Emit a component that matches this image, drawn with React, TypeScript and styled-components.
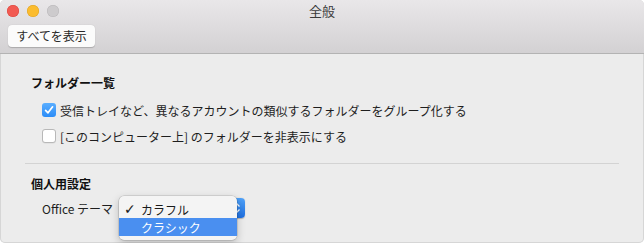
import React from "react";
import styled, { createGlobalStyle } from "styled-components";

const Global = createGlobalStyle`
  html, body { margin: 0; padding: 0; background: #ffffff; }
  body { font-family: "Noto Sans CJK JP", "Noto Sans", sans-serif; -webkit-font-smoothing: antialiased; }
`;

const Window = styled.div`
  width: 644px;
  height: 243px;
  box-sizing: border-box;
  border-radius: 5px;
  overflow: hidden;
  background: #ececec;
  display: flex;
  flex-direction: column;
  box-shadow: inset 0 0 0 1px #d6d6d6;
`;

const TitleBar = styled.div`
  height: 54px;
  box-sizing: border-box;
  background: linear-gradient(#e9e7e9, #d3d1d3);
  border-bottom: 1px solid #b3b3b3;
  display: flex;
  flex-direction: column;
`;

const TopRow = styled.div`
  height: 22px;
  display: flex;
  align-items: center;
  position: relative;
  padding-left: 7px;
  gap: 8px;
`;

const Light = styled.span<{ $c: string; $b: string }>`
  width: 12px;
  height: 12px;
  border-radius: 50%;
  background: ${(p) => p.$c};
  box-shadow: inset 0 0 0 0.5px ${(p) => p.$b};
`;

const Title = styled.div`
  position: absolute;
  left: 0;
  right: 0;
  top: 0;
  height: 22px;
  line-height: 22px;
  text-align: center;
  font-size: 13px;
  color: #3a3a3a;
  pointer-events: none;
`;

const Toolbar = styled.div`
  flex: 1;
  display: flex;
  align-items: flex-start;
  padding: 3px 0 0 8px;
`;

const ToolButton = styled.button`
  height: 22px;
  width: 87px;
  padding: 0;
  border: none;
  border-radius: 4px;
  background: #fbfbfb;
  box-shadow: 0 0.5px 1px rgba(0, 0, 0, 0.2);
  font-family: inherit;
  font-size: 12px;
  color: #2a2a2a;
  line-height: 22px;
`;

const Content = styled.div`
  flex: 1;
  padding: 21px 25px 0 25px;
  display: flex;
  flex-direction: column;
`;

const Section = styled.div`
  padding-left: 6px;
  display: flex;
  flex-direction: column;
`;

const Heading = styled.div`
  font-size: 12px;
  font-weight: 700;
  line-height: 16px;
  color: #111;
`;

const Options = styled.div<{ $top: number }>`
  display: flex;
  flex-direction: column;
  gap: 6px;
  padding-left: 11px;
  margin-top: ${(p) => p.$top}px;
`;

const Row = styled.label`
  height: 20px;
  display: flex;
  align-items: center;
  gap: 4px;
  font-size: 12px;
  color: #1e1e1e;
`;

const Box = styled.span<{ $on?: boolean }>`
  width: 14px;
  height: 14px;
  box-sizing: border-box;
  border-radius: 3px;
  display: flex;
  align-items: center;
  justify-content: center;
  background: ${(p) => (p.$on ? "linear-gradient(#5aaeff, #2b8cf7)" : "#ffffff")};
  border: ${(p) => (p.$on ? "none" : "1px solid #b8b8b8")};
  box-shadow: ${(p) => (p.$on ? "none" : "0 0.5px 0.5px rgba(0,0,0,0.08)")};
`;

const Separator = styled.div`
  height: 1px;
  background: #d3d3d3;
  margin: 17px 0 12px 0;
`;

const ThemeRow = styled.div`
  display: flex;
  align-items: center;
  height: 20px;
  margin-top: 6px;
  padding-left: 11px;
  font-size: 12px;
  color: #1e1e1e;
`;

const PopupWrap = styled.div`
  position: relative;
  margin-left: 6px;
  width: 126px;
  height: 20px;
`;

const PopupButton = styled.div`
  width: 100%;
  height: 20px;
  border-radius: 4px;
  background: #fbfbfb;
  box-shadow: 0 0.5px 1px rgba(0, 0, 0, 0.25);
  display: flex;
  justify-content: flex-end;
`;

const Arrows = styled.div`
  width: 16px;
  height: 20px;
  border-radius: 0 4px 4px 0;
  background: linear-gradient(#4fa2f9, #1f6fe0);
  display: flex;
  align-items: center;
  justify-content: center;
`;

const Menu = styled.div`
  position: absolute;
  left: 0;
  top: -2px;
  width: 118px;
  box-sizing: border-box;
  padding: 4px 0;
  border-radius: 5px;
  background: #f4f4f4;
  box-shadow: 0 0 0 0.5px rgba(0, 0, 0, 0.18), 0 3px 8px rgba(0, 0, 0, 0.22);
`;

const MenuItem = styled.div<{ $active?: boolean }>`
  height: 18px;
  display: flex;
  align-items: center;
  font-size: 12px;
  color: ${(p) => (p.$active ? "#ffffff" : "#1a1a1a")};
  background: ${(p) => (p.$active ? "#4a8ff0" : "transparent")};
`;

const Check = styled.span`
  width: 22px;
  flex: none;
  padding-left: 5px;
  box-sizing: border-box;
  font-family: "DejaVu Sans", sans-serif;
  font-size: 14px;
  font-weight: 700;
  line-height: 18px;
`;

export default function App() {
  return (
    <>
      <Global />
      <Window>
        <TitleBar>
          <TopRow>
            <Light $c="#f25a52" $b="#d9453e" />
            <Light $c="#fbbc2e" $b="#dea123" />
            <Light $c="#cdcbcd" $b="#b8b6b8" />
            <Title>全般</Title>
          </TopRow>
          <Toolbar>
            <ToolButton>すべてを表示</ToolButton>
          </Toolbar>
        </TitleBar>
        <Content>
          <Section>
            <Heading>フォルダー一覧</Heading>
            <Options $top={9}>
              <Row>
                <Box $on>
                  <svg width="10" height="10" viewBox="0 0 10 10">
                    <path d="M1.6 5.3 L4 7.8 L8.6 1.8" fill="none" stroke="#fff" strokeWidth="1.7" strokeLinecap="round" strokeLinejoin="round" />
                  </svg>
                </Box>
                受信トレイなど、異なるアカウントの類似するフォルダーをグループ化する
              </Row>
              <Row>
                <Box />
                [このコンピューター上] のフォルダーを非表示にする
              </Row>
            </Options>
          </Section>
          <Separator />
          <Section>
            <Heading>個人用設定</Heading>
            <ThemeRow>
              Office テーマ
              <PopupWrap>
                <PopupButton>
                  <Arrows>
                    <svg width="8" height="12" viewBox="0 0 8 12">
                      <path d="M1.5 4.5 L4 2 L6.5 4.5 M1.5 7.5 L4 10 L6.5 7.5" fill="none" stroke="#fff" strokeWidth="1.3" />
                    </svg>
                  </Arrows>
                </PopupButton>
                <Menu>
                  <MenuItem>
                    <Check>✓</Check>
                    <span>カラフル</span>
                  </MenuItem>
                  <MenuItem $active>
                    <Check />
                    <span>クラシック</span>
                  </MenuItem>
                </Menu>
              </PopupWrap>
            </ThemeRow>
          </Section>
        </Content>
      </Window>
    </>
  );
}
